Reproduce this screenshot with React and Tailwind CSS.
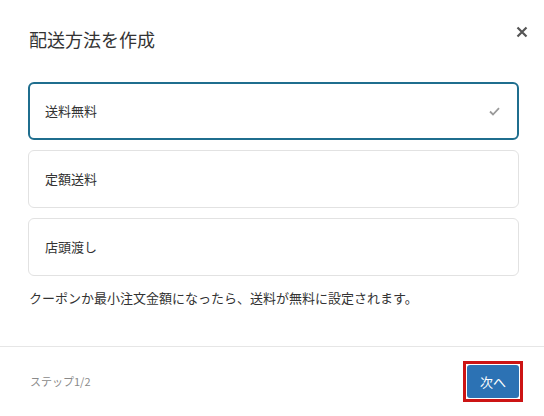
import React from 'react';

const font = { fontFamily: '"Noto Sans CJK JP", "Noto Sans", sans-serif' };

function Option({ label, selected }) {
  return (
    <div
      className={
        selected
          ? 'flex items-center justify-between h-[58px] rounded-md border-2 border-[#1f6e8e] pl-[15px] pr-[17px]'
          : 'flex items-center justify-between h-[58px] rounded-md border border-[#e2e2e2] pl-[16px] pr-[18px]'
      }
    >
      <span className="text-[13px] text-[#333]">{label}</span>
      {selected && (
        <svg width="11" height="9" viewBox="0 0 11 9" fill="none">
          <path d="M1 4.5 L4 7.5 L10 1.2" stroke="#9a9a9a" strokeWidth="1.8" />
        </svg>
      )}
    </div>
  );
}

export default function App() {
  return (
    <div className="w-[544px] h-[416px] bg-white flex flex-col" style={font}>
      {/* header */}
      <div className="flex items-start justify-between pl-[29px] pr-[16px] pt-[26px]">
        <h1 className="text-[18px] leading-[26px] text-[#333] font-normal">配送方法を作成</h1>
        <svg width="12" height="12" viewBox="0 0 12 12">
          <path d="M1.5 1.5 L10.5 10.5 M10.5 1.5 L1.5 10.5" stroke="#555" strokeWidth="2.2" />
        </svg>
      </div>

      {/* body */}
      <div className="flex flex-col gap-[10px] pl-[28px] pr-[25px] pt-[30px]">
        <Option label="送料無料" selected />
        <Option label="定額送料" />
        <Option label="店頭渡し" />
      </div>
      <p className="pl-[29px] pt-[12px] text-[13px] leading-[20px] text-[#333]">
        クーポンか最小注文金額になったら、送料が無料に設定されます。
      </p>

      {/* footer */}
      <div className="mt-auto border-t border-[#e6e6e6] h-[70px] flex items-center justify-between pl-[30px] pr-[21px]">
        <span className="text-[11px] text-[#8a8a8a]">ステップ1/2</span>
        <div className="border-[3px] border-[#cc1414] p-[1px]">
          <button className="w-[52px] h-[33px] rounded-[3px] bg-[#2c72b4] text-white text-[13px]">次へ</button>
        </div>
      </div>
    </div>
  );
}
